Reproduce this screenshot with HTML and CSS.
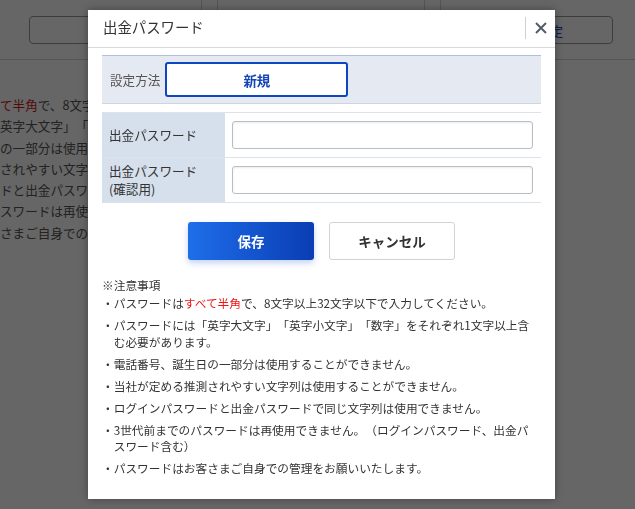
FILE: index.html
```html
<!DOCTYPE html>
<html lang="ja">
<head>
<meta charset="utf-8">
<title>出金パスワード</title>
<link rel="stylesheet" href="styles.css">
</head>
<body>
<div class="page">
  <div class="topbar">
    <div class="col col1"><div class="pbtn"></div></div>
    <div class="col col2"></div>
    <div class="col col3"><div class="pbtn">出金設定</div></div>
  </div>
  <ul class="page-notes">
    <li><span class="red">て半角</span>で、8文字</li>
    <li>英字大文字」「英</li>
    <li>の一部分は使用す</li>
    <li>されやすい文字列</li>
    <li>ドと出金パスワー</li>
    <li>スワードは再使用</li>
    <li>さまご自身での管</li>
  </ul>
</div>
<div class="overlay"></div>
<div class="modal">
  <div class="mhead">
    <div class="mtitle">出金パスワード</div>
    <div class="close">
      <svg width="12" height="12" viewBox="0 0 12 12"><path d="M1 1L11 11M11 1L1 11" stroke="#555b68" stroke-width="2" fill="none"/></svg>
    </div>
  </div>
  <div class="mbody">
    <div class="setting">
      <span class="slabel">設定方法</span>
      <div class="method">新規</div>
    </div>
    <div class="form">
      <div class="row">
        <div class="lab">出金パスワード</div>
        <div class="fld"><input type="password" class="inp"></div>
      </div>
      <div class="row">
        <div class="lab">出金パスワード<br>(確認用)</div>
        <div class="fld"><input type="password" class="inp"></div>
      </div>
    </div>
    <div class="actions">
      <button class="btn btn-save">保存</button>
      <button class="btn btn-cancel">キャンセル</button>
    </div>
    <div class="ntitle">※注意事項</div>
    <ul class="notes">
      <li>・パスワードは<span class="red">すべて半角</span>で、8文字以上32文字以下で入力してください。</li>
      <li>・パスワードには「英字大文字」「英字小文字」「数字」をそれぞれ1文字以上含む必要があります。</li>
      <li>・電話番号、誕生日の一部分は使用することができません。</li>
      <li>・当社が定める推測されやすい文字列は使用することができません。</li>
      <li>・ログインパスワードと出金パスワードで同じ文字列は使用できません。</li>
      <li>・3世代前までのパスワードは再使用できません。（ログインパスワード、出金パスワード含む）</li>
      <li>・パスワードはお客さまご自身での管理をお願いいたします。</li>
    </ul>
  </div>
</div>
</body>
</html>
```
FILE: styles.css
```css
html, body {
  margin: 0;
  height: 100%;
}
body {
  font-family: "Noto Sans CJK JP", "Noto Sans", sans-serif;
  background: #fff;
  overflow: hidden;
  color: #333;
  text-spacing-trim: space-all;
}
.page {
  height: 100%;
}
.topbar {
  display: flex;
  height: 60px;
  box-sizing: border-box;
  border-bottom: 1px solid #d4d4d4;
}
.col {
  box-sizing: border-box;
  height: 100%;
}
.col1 {
  width: 202px;
  border-right: 1px solid #d4d4d4;
}
.col2 {
  width: 208px;
  margin-left: 15px;
  border-left: 1px solid #d4d4d4;
  border-right: 1px solid #d4d4d4;
}
.col3 {
  flex: 1;
  margin-left: 15px;
  border-left: 1px solid #d4d4d4;
}
.pbtn {
  box-sizing: border-box;
  height: 28px;
  margin: 16px auto 0;
  border: 1px solid #9a9a9a;
  border-radius: 4px;
  display: flex;
  align-items: center;
  justify-content: center;
  font-size: 12.6px;
  color: #1546b8;
}
.col1 .pbtn { width: 144px; }
.col3 .pbtn { width: 149px; }
.page-notes {
  list-style: none;
  margin: 0;
  padding: 34px 0 0 0;
  font-size: 12.6px;
  line-height: 21.3px;
  color: #555;
  white-space: nowrap;
}
.page-notes .red { color: #d01818; }
.red { color: #f01414; }
.overlay {
  position: fixed;
  inset: 0;
  background: rgba(0, 0, 0, 0.6);
}
.modal {
  position: absolute;
  left: 88px;
  top: 10px;
  width: 467px;
  background: #fff;
  box-shadow: 0 0 8px rgba(0, 0, 0, 0.35);
}
.mhead {
  display: flex;
  align-items: center;
  height: 38px;
  box-sizing: border-box;
  border-bottom: 1px solid #d9d9d9;
  padding-left: 15px;
}
.mtitle {
  flex: 1;
  font-size: 14.4px;
  line-height: 20px;
  color: #333;
  padding-bottom: 3px;
}
.close {
  width: 30px;
  height: 22px;
  box-sizing: border-box;
  border-left: 1px solid #d0d0d0;
  display: flex;
  align-items: center;
  justify-content: center;
  margin-bottom: 1px;
}
.mbody {
  padding: 7px 14px 22px;
}
.setting {
  display: flex;
  align-items: center;
  height: 49px;
  box-sizing: border-box;
  background: #e5e9f2;
  border-top: 1px solid #b0c0dc;
  border-bottom: 1px solid #cdd5e2;
  padding: 0 8px;
}
.slabel {
  font-size: 12.6px;
  color: #555;
  margin-right: 5px;
}
.method {
  width: 183px;
  height: 35px;
  box-sizing: border-box;
  border: 2px solid #0c46c2;
  border-radius: 3px;
  background: #fff;
  color: #1546b8;
  font-weight: bold;
  font-size: 13.5px;
  display: flex;
  align-items: center;
  justify-content: center;
}
.form {
  margin-top: 8px;
  border-top: 1px solid #dde2ea;
}
.row {
  display: flex;
  height: 45px;
  box-sizing: border-box;
  border-bottom: 1px solid #dde2ea;
}
.lab {
  width: 123px;
  box-sizing: border-box;
  background: #d6dfec;
  padding-left: 7px;
  display: flex;
  align-items: center;
  font-size: 12.6px;
  line-height: 18.4px;
  color: #333;
}
.fld {
  flex: 1;
  display: flex;
  align-items: center;
  padding: 0 8px 0 7px;
}
.inp {
  width: 100%;
  height: 28px;
  box-sizing: border-box;
  border: 1px solid #b9bdc6;
  border-radius: 3px;
  box-shadow: inset 0 1px 2px rgba(0, 0, 0, 0.08);
  background: #fff;
  margin: 0;
}
.actions {
  display: flex;
  justify-content: center;
  gap: 15px;
  margin-top: 19px;
}
.btn {
  width: 126px;
  height: 38px;
  box-sizing: border-box;
  border-radius: 3px;
  font-family: inherit;
  font-size: 13.5px;
  font-weight: bold;
  padding: 0;
  margin: 0;
}
.btn-save {
  border: none;
  color: #fff;
  background: linear-gradient(90deg, #1e6eea, #0a3db3);
  box-shadow: 0 3px 6px rgba(20, 80, 200, 0.25);
}
.btn-cancel {
  border: 1px solid #cfd3da;
  background: #fff;
  color: #333;
}
.ntitle {
  margin-top: 17px;
  font-size: 11.7px;
  line-height: 16.5px;
  color: #333;
}
.notes {
  list-style: none;
  margin: 1.5px 4px 0 0;
  padding: 0;
}
.notes li {
  font-size: 11.7px;
  line-height: 16.5px;
  color: #333;
  padding-left: 1em;
  text-indent: -1em;
  margin-top: 5.5px;
}
.notes li:first-child {
  margin-top: 0;
}
```
